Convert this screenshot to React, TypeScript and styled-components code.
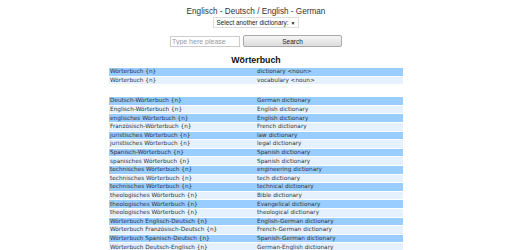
import styled, { createGlobalStyle } from "styled-components";

const GlobalStyle = createGlobalStyle`
  html, body {
    margin: 0;
    padding: 0;
    background: #fff;
  }
  body {
    font-family: "Liberation Sans", Arial, sans-serif;
    color: #333;
  }
`;

const Page = styled.div`
  width: 512px;
  display: flex;
  flex-direction: column;
  align-items: center;
  padding-top: 6px;
`;

const Title = styled.h1`
  margin: 0;
  font-size: 8.2px;
  font-weight: normal;
  line-height: 11px;
  color: #333;
`;

const Picker = styled.div`
  display: flex;
  align-items: center;
  gap: 2px;
  height: 9px;
  padding: 0 2px;
  border: 1px solid #ddd;
  font-size: 6.4px;
  color: #222;
`;

const Caret = styled.span`
  font-size: 5px;
`;

const SearchRow = styled.form`
  margin-top: 7px;
  display: flex;
  gap: 3px;
  align-items: center;
`;

const Field = styled.input`
  box-sizing: border-box;
  width: 70px;
  height: 11px;
  padding: 0 1px;
  border: 1px solid #ccc;
  font-family: "Liberation Sans", Arial, sans-serif;
  font-size: 7px;
  &::placeholder {
    color: #999;
  }
`;

const Button = styled.button`
  box-sizing: border-box;
  width: 99px;
  height: 12px;
  padding: 0;
  border: 1px solid #aaa;
  border-radius: 2px;
  background: linear-gradient(#f6f6f6, #dcdcdc);
  font-family: "Liberation Sans", Arial, sans-serif;
  font-size: 6.5px;
  color: #222;
`;

const Heading = styled.h2`
  margin: 8px 0 2px;
  font-size: 8.8px;
  font-weight: bold;
  line-height: 10px;
  color: #111;
`;

const Table = styled.table`
  width: 294px;
  border-collapse: separate;
  border-spacing: 0 1px;
  font-family: "DejaVu Sans", Verdana, sans-serif;
  font-size: 5.75px;
  color: #333;
  table-layout: fixed;
`;

const Row = styled.tr<{ $dark?: boolean }>`
  background: ${(p) => (p.$dark ? "#99ccff" : "#e5f1ff")};
`;

const Cell = styled.td`
  height: 7.6px;
  padding: 0 1px;
  line-height: 7px;
  white-space: nowrap;
  overflow: hidden;
  width: 50%;
`;

const Spacer = styled.tr`
  height: 11px;
`;

const top = [
  ["Wörterbuch {n}", "dictionary <noun>"],
  ["Wörterbuch {n}", "vocabulary <noun>"],
];

const rest = [
  ["Deutsch-Wörterbuch {n}", "German dictionary"],
  ["Englisch-Wörterbuch {n}", "English dictionary"],
  ["englisches Wörterbuch {n}", "English dictionary"],
  ["Französisch-Wörterbuch {n}", "French dictionary"],
  ["juristisches Wörterbuch {n}", "law dictionary"],
  ["juristisches Wörterbuch {n}", "legal dictionary"],
  ["Spanisch-Wörterbuch {n}", "Spanish dictionary"],
  ["spanisches Wörterbuch {n}", "Spanish dictionary"],
  ["technisches Wörterbuch {n}", "engineering dictionary"],
  ["technisches Wörterbuch {n}", "tech dictionary"],
  ["technisches Wörterbuch {n}", "technical dictionary"],
  ["theologisches Wörterbuch {n}", "Bible dictionary"],
  ["theologisches Wörterbuch {n}", "Evangelical dictionary"],
  ["theologisches Wörterbuch {n}", "theological dictionary"],
  ["Wörterbuch Englisch-Deutsch {n}", "English-German dictionary"],
  ["Wörterbuch Französisch-Deutsch {n}", "French-German dictionary"],
  ["Wörterbuch Spanisch-Deutsch {n}", "Spanish-German dictionary"],
  ["Wörterbuch Deutsch-Englisch {n}", "German-English dictionary"],
];

export default function App() {
  return (
    <Page>
      <GlobalStyle />
      <Title>Englisch - Deutsch / English - German</Title>
      <Picker>
        Select another dictionary: <Caret>▼</Caret>
      </Picker>
      <SearchRow onSubmit={(e) => e.preventDefault()}>
        <Field placeholder="Type here please" />
        <Button type="submit">Search</Button>
      </SearchRow>
      <Heading>Wörterbuch</Heading>
      <Table>
        <tbody>
          {top.map(([de, en], i) => (
            <Row key={"t" + i} $dark={i % 2 === 0}>
              <Cell>{de}</Cell>
              <Cell>{en}</Cell>
            </Row>
          ))}
          <Spacer>
            <td colSpan={2} />
          </Spacer>
          {rest.map(([de, en], i) => (
            <Row key={"r" + i} $dark={i % 2 === 0}>
              <Cell>{de}</Cell>
              <Cell>{en}</Cell>
            </Row>
          ))}
        </tbody>
      </Table>
    </Page>
  );
}
